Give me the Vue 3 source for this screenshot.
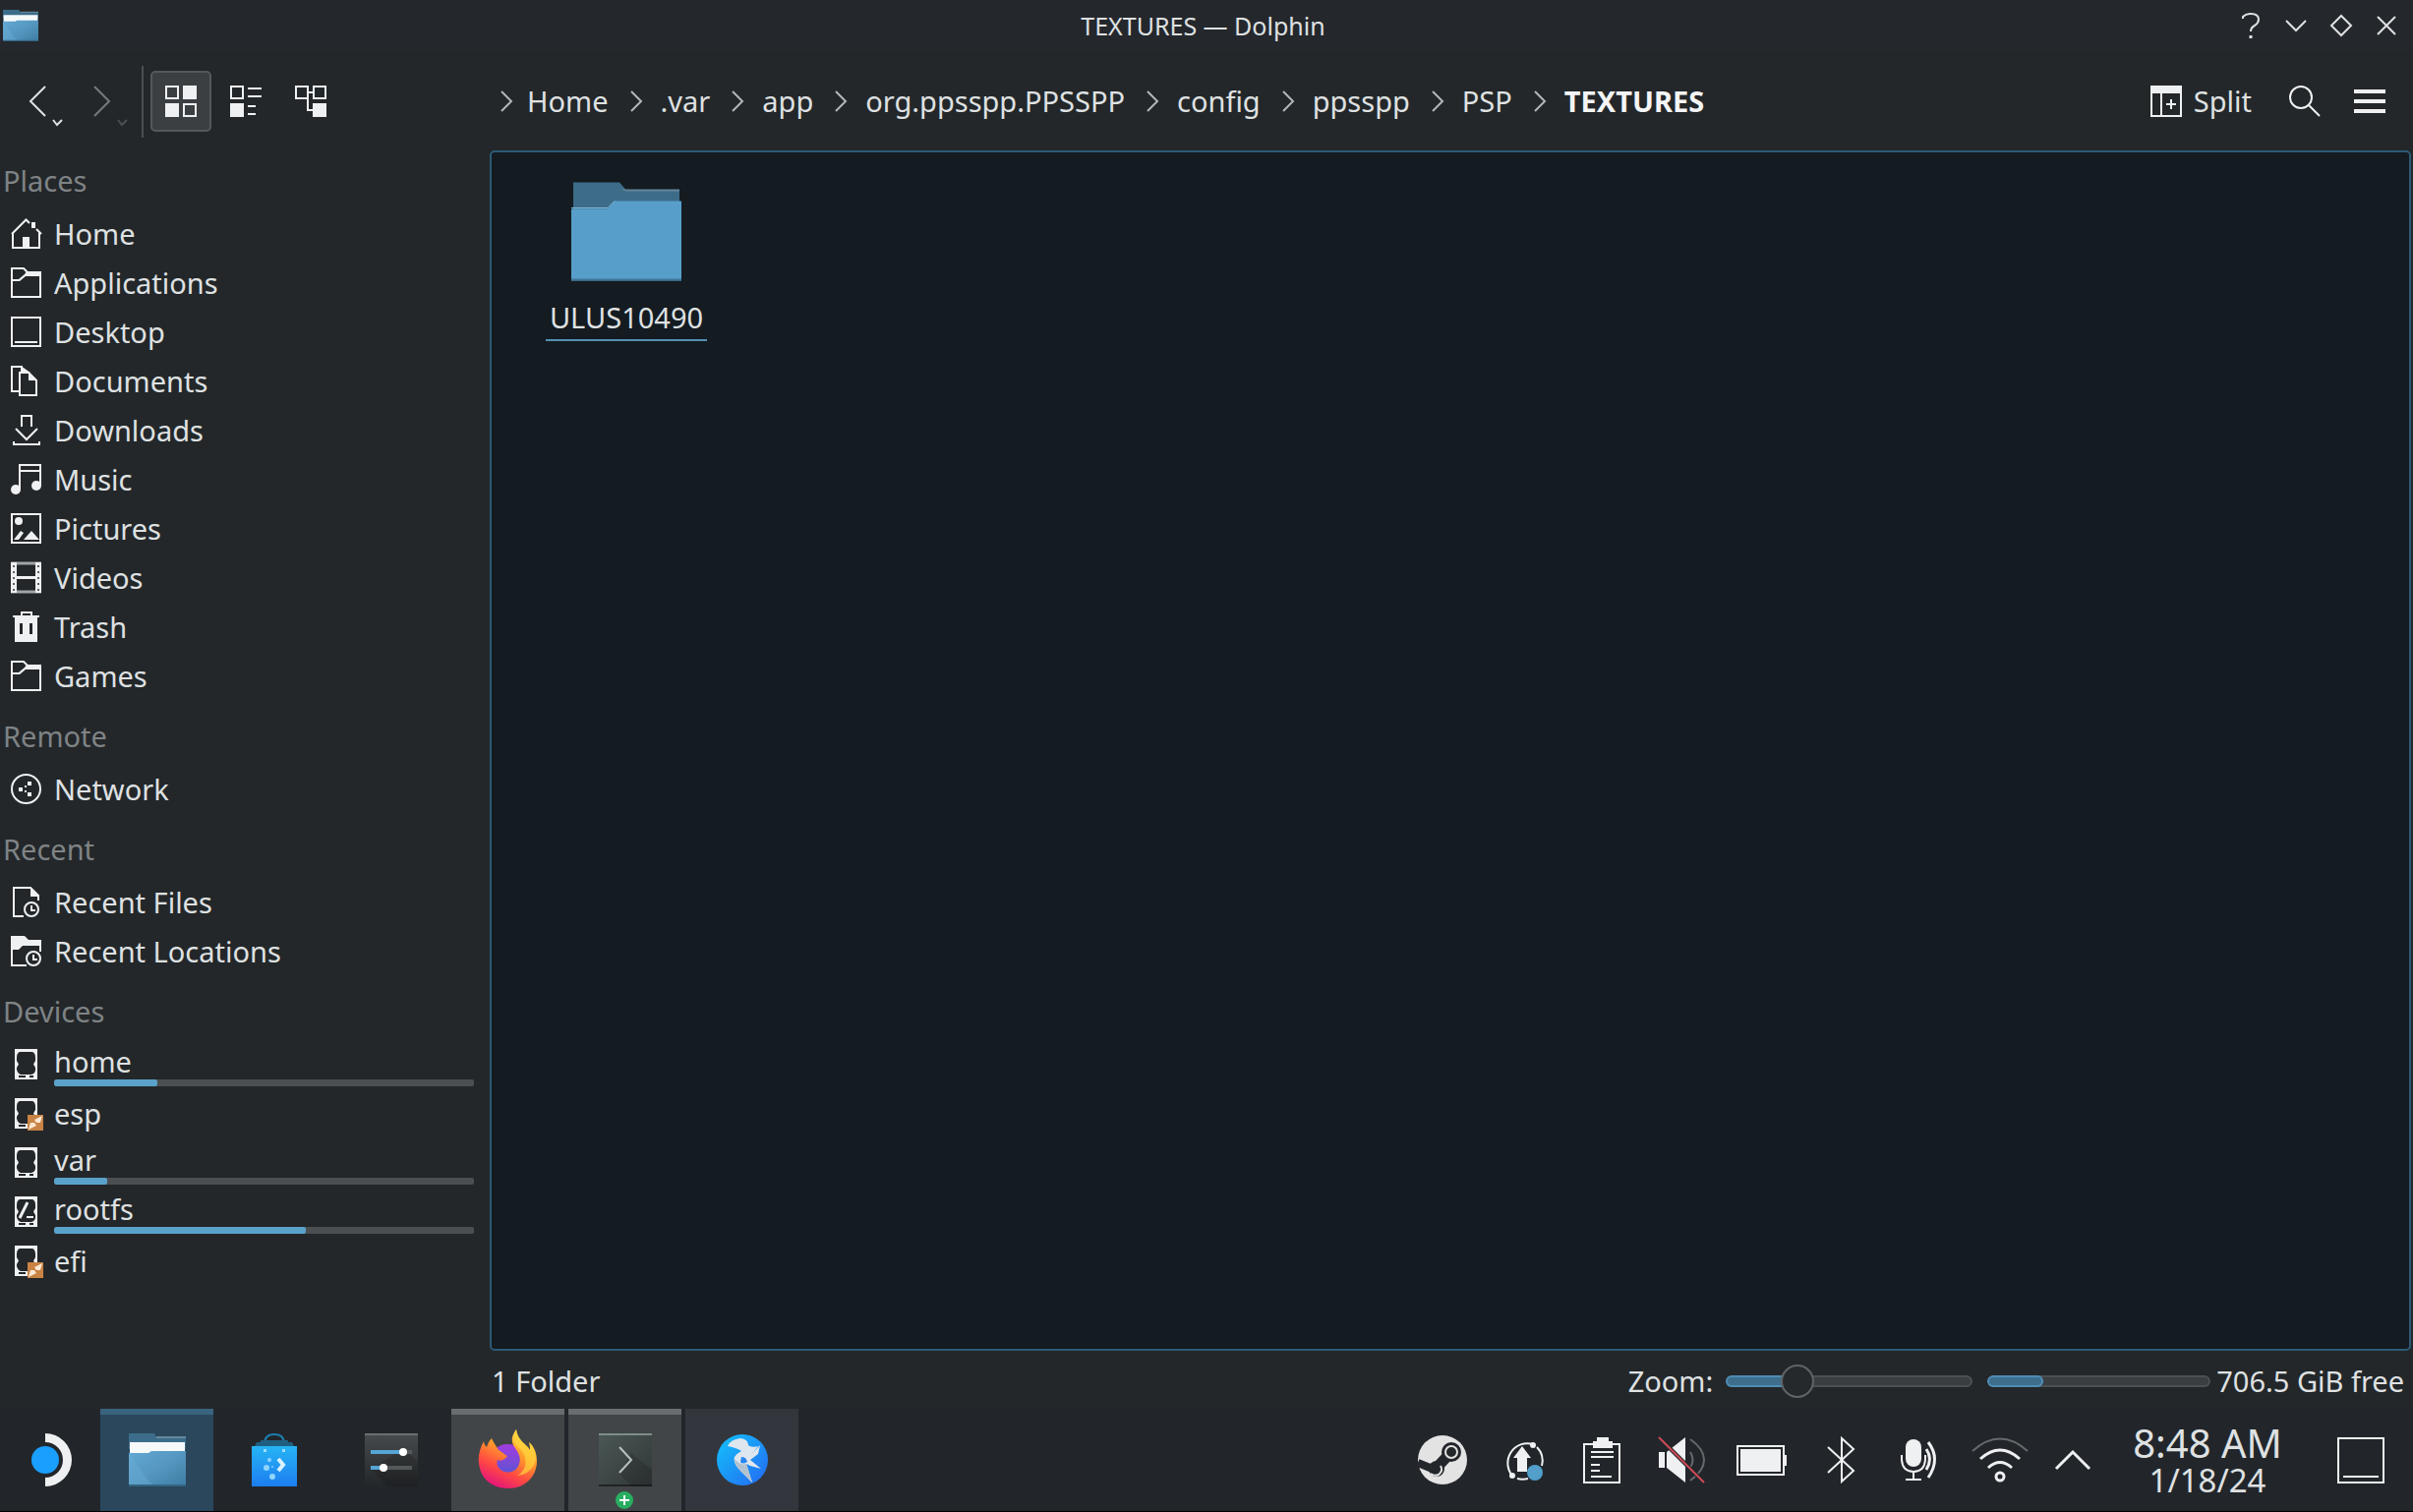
<script setup>
import { ref } from 'vue'

const crumbs = ['Home', '.var', 'app', 'org.ppsspp.PPSSPP', 'config', 'ppsspp', 'PSP', 'TEXTURES']

const sections = [
  {
    title: 'Places',
    items: [
      { label: 'Home', icon: 'home' },
      { label: 'Applications', icon: 'folder' },
      { label: 'Desktop', icon: 'desktop' },
      { label: 'Documents', icon: 'documents' },
      { label: 'Downloads', icon: 'downloads' },
      { label: 'Music', icon: 'music' },
      { label: 'Pictures', icon: 'pictures' },
      { label: 'Videos', icon: 'videos' },
      { label: 'Trash', icon: 'trash' },
      { label: 'Games', icon: 'folder' }
    ]
  },
  { title: 'Remote', items: [{ label: 'Network', icon: 'network' }] },
  {
    title: 'Recent',
    items: [
      { label: 'Recent Files', icon: 'recentFiles' },
      { label: 'Recent Locations', icon: 'recentLocations' }
    ]
  },
  {
    title: 'Devices',
    items: [
      { label: 'home', icon: 'drive', used: 24.5 },
      { label: 'esp', icon: 'driveUnmounted' },
      { label: 'var', icon: 'drive', used: 12.7 },
      { label: 'rootfs', icon: 'driveRoot', used: 60 },
      { label: 'efi', icon: 'driveUnmounted' }
    ]
  }
]

const fg = '#eff0f1'
const line = (d, w = 2, c = fg) => `<path d="${d}" fill="none" stroke="${c}" stroke-width="${w}"/>`
const fill = (d, c = fg) => `<path d="${d}" fill="${c}" fill-rule="evenodd"/>`

const driveBody = fill('M4 0H27V31H4Z M9 3Q6 4 6 9V12L8 15.500L6 19V21Q7 25 10 26H21Q25 25 25 21V19L23 15.500L25 12V9Q25 4 22 3Z M8 27V29H15V27Z M19 27V29H23V27Z')
const plug = '<rect x="17" y="17" width="16" height="16" fill="#c98344"/>' +
  fill('M32 18L30 25L26 25L24 22Z M18 32L20 25L24 25L26 28Z', '#fbe9d5')
const clock = (x) => `<circle cx="${x}" cy="23" r="7" fill="none" stroke="${fg}" stroke-width="2"/>` +
  line(`M${x} 19V24H${x + 4}`)

const icons = {
  home: line('M1 16L15.500 1.500L19 5') + line('M2 15V30H29V14') + line('M26 11L31 16') +
    fill('M21 4H25V10H21Z') + fill('M12 19H19V30H12Z'),
  folder: line('M1 1H13L17 5H30V30H1Z') + fill('M16 4H31V9H15L9 14H1V12H8L14 7Z'),
  desktop: line('M1 1H30V30H1Z') + line('M4 26H27'),
  documents: line('M8 26H1V1H12') + fill('M10 0L20 7H10Z') + line('M9 7H18L26 15V30H9Z') + fill('M18 6L27 15H18Z'),
  downloads: line('M11 12V1H21V12') + line('M5 14L16 25L27 14') + line('M3 27V30H29V27'),
  music: line('M9 26V1H30V22') + line('M9 7H30') +
    `<circle cx="5" cy="26" r="5" fill="${fg}"/><circle cx="26" cy="22" r="5" fill="${fg}"/>`,
  pictures: line('M1 1H30V30H1Z') + `<circle cx="8" cy="8" r="4" fill="${fg}"/>` +
    fill('M13 27L21 18L29 27Z') + fill('M3 27L10 18L13 20L8 27Z'),
  videos: line('M0 1H31M0 30H31', 3, '#a2a4a6') + line('M6 15.500H25', 3) + line('M3 0V31M28 0V31', 6) +
    line('M3 3V5M3 9V11M3 15V17M3 21V23M3 27V29M28 3V5M28 9V11M28 15V17M28 21V23M28 27V29', 2, '#5f6265'),
  trash: line('M11 4V1H21V4') + line('M2 5H29') + fill('M4 5H27V31H4Z M9 12V23H12V12Z M19 12V23H22V12Z'),
  network: `<circle cx="15.500" cy="15.500" r="14.500" fill="none" stroke="${fg}" stroke-width="2"/>` +
    fill('M8 14H12V18H8Z M17 8H21V12H17Z M17 19H21V23H17Z M14 12H16V14H14Z M14 17H16V19H14Z'),
  recentFiles: line('M13 30H3V1H20L28 9V14') + fill('M20 0L29 10H20Z') + clock(21),
  recentLocations: fill('M0 0H14L18 4H31V10H12L8 14H0Z') + line('M1 12V30H16') + line('M30 9V16') + clock(23),
  drive: driveBody,
  driveUnmounted: driveBody + plug,
  driveRoot: driveBody + line('M9 22L17 6', 3) + line('M16 21H23', 2),
  icons: line('M1 1H13V13H1Z M19 19H31V31H19Z') + fill('M18 0H32V14H18Z M0 18H14V32H0Z'),
  compact: line('M1 1H13V13H1Z M18 3H32M18 11H32M18 21H26M18 29H26') + fill('M0 18H14V32H0Z'),
  tree: line('M1 1H13V13H1Z M19 1H31V13H19Z M13 7H19M13 13V25H19') + fill('M18 18H32V32H18Z'),
  split: line('M1 1H31V31H1Z M11 8V31M16 19H26M21 14V24') + fill('M0 0H32V8H0Z'),
  search: `<circle cx="12" cy="12" r="11" fill="none" stroke="${fg}" stroke-width="2"/>` + line('M20 20L31 31'),
  menu: fill('M0 4H32V8H0Z M0 14H32V18H0Z M0 24H32V28H0Z')
}

const openFolder =
  fill('M0 0H26L28 4H58V16H0Z', '#3b6d8a') + fill('M28 3H58V5H28Z', '#66889c') +
  fill('M1 9H57V24H1Z', '#f6f9fa') + fill('M0 20H20L23 18H58V54H0Z', 'url(#folder)') +
  fill('M0 20L18 46L26 54H0Z', '#6fb4dc55') + fill('M0 52H58V54H0Z', '#346582')

const apps = [
  { name: 'Files', state: 'active', art: `<g transform="translate(3 5)">${openFolder}</g>` },
  {
    name: 'Discover',
    state: '',
    art: line('M22 22V16Q22 6 32 6Q42 6 42 16V22', 2, '#1c7db0') + fill('M12 18L14 14H18V12H46V14H50L52 18Z', '#1f5f80') +
      fill('M9 18H55V59H9Z', 'url(#bag)') + fill('M21 21H24V24H21Z M40 21H43V24H40Z', '#9bdcff') +
      line('M36 31L41 37L36 43', 4, '#d9f2ff') +
      '<g fill="#8fd6ff"><circle cx="24" cy="40" r="3"/><circle cx="30" cy="49" r="3"/><circle cx="27" cy="32" r="2"/><circle cx="30" cy="39" r="1"/></g>'
  },
  {
    name: 'Settings',
    state: '',
    art: fill('M5 5H59V59H5Z', 'url(#dark)') + fill('M5 5H59V7H5Z', '#6b6e70') + fill('M12 42L28 59H59V34L44 20Z', '#00000022') +
      line('M11 24H53M11 40H53', 4, '#55585b') + line('M11 24H43M11 40H24', 4, '#55a5d5') +
      '<circle cx="44" cy="24" r="4" fill="#fff"/><circle cx="24" cy="40" r="4" fill="#fff"/>'
  },
  {
    name: 'Firefox',
    state: 'open',
    art: '<circle cx="31" cy="34" r="18" fill="url(#globe)"/>' +
      fill('M40 1C35 8 34 13 39 20C43 26 45 30 43 36C41 43 34 46 28 44C22 42 19 37 21 32C25 34 29 31 31 28C28 27 26 24 22 22C20 18 17 15 15 10C12 13 11 16 10 19C8 17 7 15 7 13C3 20 1 28 2 36C4 52 16 61 32 61C49 61 61 49 61 33C61 25 58 18 53 14C54 17 54 20 54 22C50 15 41 13 40 1Z', 'url(#fox)') +
      fill('M40 1C36 9 36 14 43 20C52 28 52 42 41 48C53 47 60 38 60 29C59 22 57 17 53 14C54 17 54 20 54 22C50 15 42 13 40 1Z', '#ffd93eaa')
  },
  {
    name: 'Konsole',
    state: 'open',
    art: fill('M5 5H59V59H5Z', 'url(#term)') + fill('M5 5H59V7H5Z', '#7e8d89') + fill('M5 57H59V59H5Z', '#202326') +
      fill('M26 46L39 59H59V42L38 25Z', '#00000022') + line('M26 19L38 32L26 45', 2, '#b9c1be'),
    badge: true
  },
  {
    name: 'Falcon',
    state: 'faint',
    art: '<circle cx="32" cy="32" r="26" fill="url(#falcon)"/>' +
      fill('M17 18Q20 11 30 10Q38 11 38 17Q42 20 48 18Q44 23 40 27L50 17L48 26L40 32L51 41L40 38L36 36L42 55L30 43Q22 35 24 29Q27 25 31 23Q27 20 17 18Z', '#dfe7ee') +
      fill('M36 36L42 55L30 43Q24 38 24 31Q30 38 36 36Z', '#b2c3d0') + fill('M31 29Q36 29 37 34Q32 37 30 34Z', '#2a86f3')
  }
]

const tray = [
  {
    name: 'Steam',
    art: '<circle cx="32" cy="32" r="25" fill="#e3e3e3"/>' +
      line('M25 41L41 24', 11, '#23262b') +
      '<circle cx="41" cy="24" r="10" fill="#23262b"/><circle cx="41" cy="24" r="6" fill="none" stroke="#e3e3e3" stroke-width="2"/>' +
      '<circle cx="26" cy="41" r="8" fill="#23262b"/>' + line('M7 35L24 42', 8, '#23262b') +
      line('M20 46Q24 49 28 47Q33 43 30 38', 2, '#e3e3e3')
  },
  {
    name: 'Updates',
    art: line('M43 16A20 20 0 0 0 22 48M27 51A20 20 0 0 0 38 51M47 19A20 20 0 0 1 52 38') +
      '<g fill="#eff0f1"><circle cx="43" cy="17" r="3"/><circle cx="22" cy="48" r="3"/></g>' +
      fill('M32 18L41 30H37V44H27V30H23Z') + '<circle cx="45" cy="45" r="8" fill="#519fca"/>'
  },
  {
    name: 'Clipboard',
    art: line('M14 16H50V55H14Z') + fill('M27 9H39V13H43V20H23V13H27Z') + line('M21 24H44M21 29H44M21 37H30M21 43H30M21 49H42')
  },
  {
    name: 'Volume',
    art: fill('M9 24H15V40H9Z M17 24L36 9V55L17 40Z') +
      line('M41 24Q46 32 41 40', 2, '#66696c') + line('M41 11Q55 21 55 32Q55 43 41 53', 2, '#66696c') + line('M9 9L55 55', 4, '#23262b') +
      line('M9 9L55 55', 2, '#d04a56')
  },
  { name: 'Battery', art: line('M8 18H55V47H8Z') + fill('M11 21H52V44H11Z M55 27H58V38H55Z') },
  { name: 'Bluetooth', art: line('M19 19L45 43L33 54V10L45 21L19 45') },
  {
    name: 'Microphone',
    art: `<rect x="17" y="11" width="16" height="28" rx="8" fill="${fg}"/>` +
      line('M13 27V32Q14 44 25 44Q36 44 37 32V27M25 44V52M17 52H33', 2) + line('M38 21Q45 31 38 42M40 14Q53 31 40 50', 3)
  },
  {
    name: 'Wi-Fi',
    art: line('M4 23Q32 -2 60 23', 2, '#66696c') + line('M12 31Q32 13 52 31', 3) + line('M20 40Q32 29 44 40', 3) +
      `<circle cx="32" cy="49" r="4" fill="none" stroke="${fg}" stroke-width="3"/>`
  }
]

const view = ref('icons')
const zoom = ref(25)
</script>

<template>
  <div class="screen">
    <svg class="defs" aria-hidden="true">
      <defs>
        <linearGradient id="folder" x1="0" y1="0" x2="1" y2="1">
          <stop offset="0" stop-color="#62a9d4" /><stop offset="0.5" stop-color="#5597c0" /><stop offset="1" stop-color="#3d7da3" />
        </linearGradient>
        <linearGradient id="bag" x1="0" y1="0" x2="0" y2="1">
          <stop offset="0" stop-color="#26b4f5" /><stop offset="1" stop-color="#1d7df0" />
        </linearGradient>
        <linearGradient id="dark" x1="0" y1="0" x2="0" y2="1">
          <stop offset="0" stop-color="#484b4d" /><stop offset="1" stop-color="#232628" />
        </linearGradient>
        <linearGradient id="term" x1="0" y1="0" x2="1" y2="1">
          <stop offset="0" stop-color="#4b5855" /><stop offset="1" stop-color="#313637" />
        </linearGradient>
        <linearGradient id="falcon" x1="0" y1="0" x2="1" y2="1">
          <stop offset="0" stop-color="#13c3fb" /><stop offset="1" stop-color="#2468f2" />
        </linearGradient>
        <linearGradient id="globe" x1="0" y1="0" x2="0" y2="1">
          <stop offset="0" stop-color="#a43ce0" /><stop offset="1" stop-color="#4f58cf" />
        </linearGradient>
        <linearGradient id="fox" x1="0.8" y1="0" x2="0.300" y2="1">
          <stop offset="0" stop-color="#ffe14a" /><stop offset="0.4" stop-color="#ff9a2a" />
          <stop offset="0.700" stop-color="#ff4a42" /><stop offset="1" stop-color="#e3127e" />
        </linearGradient>
      </defs>
    </svg>

    <header class="titlebar">
      <svg class="app-icon" viewBox="0 0 58 54" preserveAspectRatio="none" v-html="openFolder" />
      <h1>TEXTURES — Dolphin</h1>
      <div class="window-buttons">
        <button aria-label="Help"><svg viewBox="0 0 46 46"><path d="M15 16V14Q18 11 23 11Q31 11 31 17Q31 20 27 23Q23 25 23 29" /><path d="M23 33V36" stroke-width="3" /></svg></button>
        <button aria-label="Minimize"><svg viewBox="0 0 46 46"><path d="M13 18L23 28L33 18" /></svg></button>
        <button aria-label="Maximize"><svg viewBox="0 0 46 46"><path d="M23 13L33 23L23 33L13 23Z" /></svg></button>
        <button aria-label="Close"><svg viewBox="0 0 46 46"><path d="M14 14L32 32M32 14L14 32" /></svg></button>
      </div>
    </header>

    <nav class="toolbar" aria-label="Toolbar">
      <div class="tools">
        <button class="nav-button" aria-label="Back"><svg viewBox="0 0 66 62"><path d="M34 16L19 31L34 46" /><path class="caret" d="M42 50L46 55L51 50" /></svg></button>
        <button class="nav-button disabled" aria-label="Forward"><svg viewBox="0 0 66 62"><path d="M18 16L33 31L18 46" /><path class="caret" d="M42 50L46 55L51 50" /></svg></button>
        <span class="separator"></span>
        <button v-for="mode in ['icons', 'compact', 'tree']" :key="mode" class="view-button" :class="{ on: view === mode }" :aria-label="mode" @click="view = mode">
          <svg class="glyph" viewBox="0 0 32 32" v-html="icons[mode]" />
        </button>
      </div>
      <ol class="crumbs">
        <li v-for="c in crumbs" :key="c">
          <svg viewBox="0 0 12 22"><path d="M1 1L11 11L1 21" /></svg>
          <a href="#">{{ c }}</a>
        </li>
      </ol>
      <div class="actions">
        <button class="split"><svg class="glyph" viewBox="0 0 32 32" v-html="icons.split" />Split</button>
        <button aria-label="Search"><svg class="glyph" viewBox="0 0 32 32" v-html="icons.search" /></button>
        <button aria-label="Menu"><svg class="glyph" viewBox="0 0 32 32" v-html="icons.menu" /></button>
      </div>
    </nav>

    <div class="body">
      <aside class="sidebar">
        <section v-for="s in sections" :key="s.title">
          <h2>{{ s.title }}</h2>
          <a v-for="i in s.items" :key="i.label" href="#" class="place" :class="{ metered: i.used }">
            <svg class="glyph" viewBox="0 0 32 32" v-html="icons[i.icon]" />
            <span class="place-text">
              {{ i.label }}
              <progress v-if="i.used" :value="i.used" max="100" :aria-label="i.label + ' usage'"></progress>
            </span>
          </a>
        </section>
      </aside>

      <div class="content">
        <main class="view">
          <a href="#" class="item">
            <svg viewBox="0 0 112 100">
              <path d="M2 0H49L56 8H110V30H2Z" fill="#3c6c88" />
              <path d="M50 7H110V9H56Z" fill="#64869a" />
              <path d="M0 27H37L44 19H112V100H0Z" fill="#579fca" />
              <path d="M0 26H37L44 19" fill="none" stroke="#7fb9dc" stroke-width="1" />
              <path d="M0 98H112V100H0Z" fill="#3f7698" />
            </svg>
            <span>ULUS10490</span>
          </a>
        </main>
        <footer class="status">
          <span class="count">1 Folder</span>
          <label for="zoom">Zoom:</label>
          <input id="zoom" v-model="zoom" type="range" min="0" max="100" :style="{ '--level': zoom + '%' }" />
          <progress class="space" value="25" max="100" aria-label="Disk usage"></progress>
          <span>706.5 GiB free</span>
        </footer>
      </div>
    </div>

    <footer class="taskbar">
      <button class="launcher" aria-label="Launcher">
        <svg viewBox="0 0 64 64"><circle cx="27" cy="32" r="14" fill="#1a9fff" /><path d="M27 5A27 27 0 0 1 27 59V50A18 18 0 0 0 27 14Z" fill="#eff0f1" /></svg>
      </button>
      <button v-for="a in apps" :key="a.name" class="task" :class="a.state" :aria-label="a.name">
        <svg viewBox="0 0 64 64" v-html="a.art" />
        <svg v-if="a.badge" class="badge" viewBox="0 0 18 18"><circle cx="9" cy="9" r="9" fill="#27ae60" /><path d="M4 9H14M9 4V14" stroke="#fff" stroke-width="2" /></svg>
      </button>
      <div class="tray">
        <button v-for="t in tray" :key="t.name" class="tray-item" :aria-label="t.name"><svg viewBox="0 0 64 64" v-html="t.art" /></button>
        <button class="expand" aria-label="Show hidden icons"><svg viewBox="0 0 64 64"><path d="M15 41L32 24L49 41" fill="none" stroke="#eff0f1" stroke-width="3" /></svg></button>
        <div class="clock"><time class="time">8:48 AM</time><time class="date">1/18/24</time></div>
        <button class="show-desktop" aria-label="Show desktop"><svg viewBox="0 0 64 64"><path d="M9 10H55V55H9Z M14 49H50" fill="none" stroke="#eff0f1" stroke-width="2" /></svg></button>
      </div>
    </footer>
  </div>
</template>

<style>
body {
  margin: 0;
  background: #000;
}
</style>

<style scoped>
.screen {
  display: flex;
  flex-direction: column;
  box-sizing: border-box;
  min-height: 100vh;
  border-bottom: 1px solid #000;
  background: #23272a;
  color: #dfe1e2;
  font: 29px/32px "Noto Sans", sans-serif;
}
.defs {
  position: absolute;
  width: 0;
  height: 0;
}
svg {
  display: block;
  flex: none;
  overflow: visible;
}
button {
  display: flex;
  align-items: center;
  justify-content: center;
  margin: 0;
  padding: 0;
  border: 0;
  background: none;
  color: inherit;
  font: inherit;
}
a {
  color: inherit;
  text-decoration: none;
}
.glyph {
  width: 32px;
  height: 32px;
}

.titlebar {
  display: grid;
  grid-template-columns: 1fr auto 1fr;
  align-items: center;
  height: 52px;
  padding: 0 4px 0 3px;
  background: #24272c;
}
.app-icon {
  width: 36px;
  height: 32px;
}
.titlebar h1 {
  margin: 0;
  padding-right: 6px;
  font-size: 25px;
  font-weight: 400;
}
.window-buttons {
  display: flex;
  justify-content: flex-end;
}
.window-buttons svg {
  width: 46px;
  height: 46px;
  fill: none;
  stroke: #dfe1e2;
  stroke-width: 2;
}

.toolbar {
  display: flex;
  align-items: center;
  height: 90px;
  padding-top: 6px;
}
.tools {
  display: flex;
  flex: none;
  align-items: center;
  box-sizing: border-box;
  width: 498px;
  padding-left: 12px;
}
.nav-button svg {
  width: 66px;
  height: 62px;
  fill: none;
  stroke: #dfe1e2;
  stroke-width: 2;
}
.nav-button.disabled svg {
  stroke: #777a7d;
}
.nav-button.disabled .caret {
  stroke: #4c5053;
}
.separator {
  width: 2px;
  height: 73px;
  margin-right: 7px;
  background: #4b4f52;
}
.view-button {
  box-sizing: border-box;
  width: 62px;
  height: 62px;
  margin-right: 4px;
  border: 2px solid transparent;
  border-radius: 5px;
}
.view-button.on {
  border-color: #54585b;
  background: #3b3f42;
}
.crumbs {
  display: flex;
  flex: 1;
  margin: 0;
  padding: 0 0 0 11px;
  list-style: none;
}
.crumbs li {
  display: flex;
  align-items: center;
  gap: 19px;
  margin-right: 22px;
}
.crumbs li:first-child {
  gap: 15px;
}
.crumbs li:last-child {
  color: #f4f5f6;
  font-weight: 700;
}
.crumbs svg {
  width: 12px;
  height: 22px;
  fill: none;
  stroke: #b4b6b8;
  stroke-width: 2;
}
.actions {
  display: flex;
  gap: 34px;
  padding-right: 28px;
}
.actions button {
  gap: 12px;
}
.actions .split {
  padding-right: 4px;
}

.body {
  display: flex;
  flex: 1;
}
.sidebar {
  flex: none;
  width: 498px;
}
.sidebar h2 {
  height: 58px;
  margin: 0;
  padding: 7px 0 0 3px;
  color: #7f8385;
  font-size: 29px;
  font-weight: 400;
  line-height: 58px;
}
.place {
  display: flex;
  align-items: center;
  gap: 12px;
  height: 50px;
  padding: 0 16px 0 11px;
}
.place-text {
  flex: 1;
}
.metered .place-text {
  padding-top: 3px;
}
progress {
  appearance: none;
  display: block;
  width: 100%;
  height: 7px;
  margin-top: 2px;
  border: 0;
  border-radius: 2px;
  overflow: hidden;
}
progress::-webkit-progress-bar {
  background: #4b4f52;
}
progress::-webkit-progress-value {
  border-radius: 2px;
  background: #5ba2ca;
}

.content {
  display: flex;
  flex: 1;
  flex-direction: column;
  padding: 5px 2px 0 0;
}
.view {
  flex: 1;
  border: 2px solid #2c5a75;
  border-radius: 5px;
  background: #141b21;
}
.item {
  display: flex;
  flex-direction: column;
  align-items: center;
  width: 274px;
  padding-top: 30px;
}
.item svg {
  width: 112px;
  height: 101px;
}
.item span {
  margin-top: 19px;
  padding: 2px 4px 6px;
  border-bottom: 2px solid #5590b3;
}
.status {
  display: flex;
  align-items: center;
  height: 56px;
  padding: 3px 7px 0 2px;
}
.count {
  flex: 1;
}
.status input {
  appearance: none;
  width: 251px;
  height: 34px;
  margin: 0 15px 0 13px;
  background: none;
}
.status input::-webkit-slider-runnable-track {
  box-sizing: border-box;
  height: 12px;
  border-radius: 6px;
  background:
    linear-gradient(90deg, #3f6e8d var(--level), #3a3e41 var(--level)) padding-box,
    linear-gradient(90deg, #4f8db4 var(--level), #4c5053 var(--level)) border-box;
  border: 2px solid transparent;
}
.status input::-webkit-slider-thumb {
  appearance: none;
  box-sizing: border-box;
  width: 34px;
  height: 34px;
  margin-top: -13px;
  border: 2px solid #606467;
  border-radius: 50%;
  background: #26292c;
}
.space {
  box-sizing: border-box;
  width: 227px;
  height: 12px;
  margin: 0 6px 0 0;
  border: 0;
  border-radius: 6px;
}
.space::-webkit-progress-bar {
  box-sizing: border-box;
  border-radius: 6px;
  background: #3a3e41;
  box-shadow: inset 0 0 0 2px #4c5053;
}
.space::-webkit-progress-value {
  border-radius: 6px;
  background: #3f6e8d;
  box-shadow: inset 0 0 0 2px #4f8db4;
}

.taskbar {
  display: flex;
  gap: 4px;
  height: 104px;
  background: #22262b;
}
.taskbar svg {
  width: 64px;
  height: 64px;
}
.launcher {
  box-sizing: border-box;
  width: 98px;
  padding-left: 4px;
}
.task {
  position: relative;
  box-sizing: border-box;
  width: 115px;
}
.task.active {
  background: #2a475c;
  box-shadow: inset 0 6px #39647f;
}
.task.open {
  background: #414548;
  box-shadow: inset 0 6px #6a6d70;
}
.task.faint {
  background: #33363c;
}
.taskbar .badge {
  position: absolute;
  bottom: 2px;
  left: 48px;
  width: 18px;
  height: 18px;
}
.tray {
  display: flex;
  flex: 1;
  align-items: center;
  justify-content: flex-end;
}
.tray-item {
  width: 81px;
}
.expand {
  width: 68px;
}
.clock {
  display: flex;
  flex-direction: column;
  align-items: center;
  width: 206px;
  padding-top: 4px;
}
.time {
  font-size: 40px;
  line-height: 38px;
}
.date {
  font-size: 33px;
  line-height: 38px;
}
.show-desktop {
  width: 106px;
}
</style>
